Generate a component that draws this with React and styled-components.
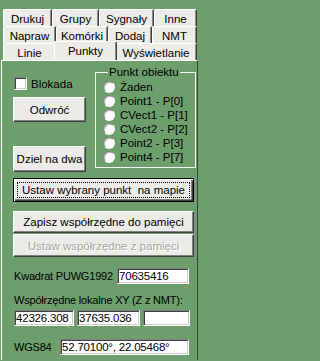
import React from 'react';
import styled, { createGlobalStyle } from 'styled-components';

const GREEN = '#6d9f6d';
const FACE = '#ecebe8';

const GlobalStyle = createGlobalStyle`
  html, body {
    margin: 0;
    padding: 0;
    background: ${GREEN};
  }
  body {
    font-family: "Liberation Sans", Arial, sans-serif;
    font-size: 11px;
    color: #000;
  }
`;

const Window = styled.div`
  width: 200px;
  height: 361px;
  overflow: hidden;
  box-sizing: border-box;
  padding-top: 9px;
  background: ${GREEN};
`;

/* zakładki */

const TabRow = styled.div`
  display: flex;
  height: 17px;
  padding-left: 3px;
  position: relative;
`;

const Tab = styled.div`
  position: relative;
  box-sizing: border-box;
  width: ${p => p.$w}px;
  height: ${p => (p.$active ? 19 : 17)}px;
  margin: ${p => (p.$active ? '-2px -2px 0' : '0')};
  z-index: ${p => (p.$active ? 2 : 1)};
  display: flex;
  align-items: center;
  justify-content: center;
  background: ${FACE};
  border-top: 1px solid #fff;
  border-left: 1px solid #fff;
  border-right: 1px solid #404040;
  border-top-left-radius: 2px;
  border-top-right-radius: 2px;
  box-shadow: inset -1px 0 #8a8a8a;
  padding-top: ${p => (p.$active ? 0 : 1)}px;
  font-size: 11.5px;
  white-space: nowrap;
`;

/* panel */

const Panel = styled.div`
  margin: 0 2px 0 1px;
  height: 300px;
  box-sizing: border-box;
  border-top: 1px solid #fff;
  border-left: 1px solid #fff;
  border-right: 1px solid #404040;
  padding: 0 3px 0 11px;
  display: flex;
  flex-direction: column;
`;

const TopSection = styled.div`
  display: flex;
  gap: 9px;
`;

const LeftCol = styled.div`
  width: 73px;
  display: flex;
  flex-direction: column;
`;

const CheckRow = styled.label`
  display: flex;
  align-items: center;
  gap: 4px;
  height: 13px;
  margin: 16px 0 0 1px;
  font-size: 11.5px;
`;

const CheckBox = styled.span`
  width: 13px;
  height: 13px;
  box-sizing: border-box;
  background: #fff;
  border: 1px solid;
  border-color: #808080 #fff #fff #808080;
  box-shadow: inset 1px 1px #404040, inset -1px -1px #d4d0c8;
`;

const Button = styled.button`
  box-sizing: border-box;
  width: 100%;
  height: ${p => p.$h}px;
  margin: ${p => p.$mt}px 0 0 0;
  padding: 0;
  font-family: inherit;
  font-size: 11.5px;
  white-space: pre;
  background: ${FACE};
  color: ${p => (p.disabled ? '#a6a6a6' : '#000')};
  text-shadow: ${p => (p.disabled ? '1px 1px #fff' : 'none')};
  border: 1px solid;
  border-color: ${p => (p.$default ? '#000' : '#fff #404040 #404040 #fff')};
  box-shadow: ${p =>
    p.$default
      ? 'inset 1px 1px #fff, inset -1px -1px #404040, inset -2px -2px #808080'
      : 'inset -1px -1px #808080'};
  outline: ${p => (p.$default ? '1px dotted #000' : 'none')};
  outline-offset: -5px;
`;

const GroupBox = styled.fieldset`
  box-sizing: border-box;
  width: 101px;
  height: 102px;
  margin: 5px -2px 0 0;
  padding: 1px 0 0 7px;
  border: 1px solid #f2f2f2;
  min-width: 0;
`;

const Legend = styled.legend`
  padding: 0 1px;
  margin-left: 5px;
  line-height: 13px;
  font-size: 11.5px;
`;

const RadioRow = styled.div`
  display: flex;
  align-items: center;
  gap: 5px;
  height: 14px;
  font-size: 11.5px;
`;

const RadioDot = styled.span`
  width: 12px;
  height: 12px;
  box-sizing: border-box;
  border-radius: 50%;
  background: #fff;
  border: 1px solid;
  border-color: #808080 #fff #fff #808080;
  box-shadow: inset 1px 1px #bdbdbd;
`;

const FieldRow = styled.div`
  display: flex;
  align-items: center;
  gap: ${p => p.$gap || 0}px;
  margin-top: ${p => p.$mt}px;
  padding-left: 1px;
  height: 16px;
`;

const Label = styled.span`
  white-space: nowrap;
  line-height: 14px;
  letter-spacing: -0.2px;
  width: ${p => (p.$w ? `${p.$w}px` : 'auto')};
  margin-top: ${p => p.$mt || 0}px;
  padding-left: ${p => p.$pl || 0}px;
`;

const Field = styled.input`
  box-sizing: border-box;
  width: ${p => p.$w}px;
  height: 16px;
  margin: 0;
  padding: 0 1px;
  font-family: inherit;
  font-size: 11.5px;
  letter-spacing: -0.2px;
  color: #000;
  background: #fff;
  border: 1px solid;
  border-color: #808080 #fff #fff #808080;
  box-shadow: inset 1px 1px #404040, inset -1px -1px #d4d0c8;
  outline: none;
`;

const tabRows = [
  [['Drukuj', 49], ['Grupy', 47], ['Sygnały', 55], ['Inne', 43]],
  [['Napraw', 53], ['Komórki', 52], ['Dodaj', 44], ['NMT', 45]],
  [['Linie', 53], ['Punkty', 59, true], ['Wyświetlanie', 82]],
];

const points = ['Żaden', 'Point1 - P[0]', 'CVect1 - P[1]', 'CVect2 - P[2]', 'Point2 - P[3]', 'Point4 - P[7]'];

const App = () => {
  return (
    <Window>
      <GlobalStyle />

      {tabRows.map((row, i) => (
        <TabRow key={i}>
          {row.map(([name, w, active]) => (
            <Tab key={name} $w={active ? w + 4 : w} $active={active}>
              {name}
            </Tab>
          ))}
        </TabRow>
      ))}

      <Panel>
        <TopSection>
          <LeftCol>
            <CheckRow><CheckBox />Blokada</CheckRow>
            <Button $h={25} $mt={7}>Odwróć</Button>
            <Button $h={26} $mt={24}>Dziel na dwa</Button>
          </LeftCol>

          <GroupBox>
            <Legend>Punkt obiektu</Legend>
            {points.map(p => (
              <RadioRow key={p}><RadioDot />{p}</RadioRow>
            ))}
          </GroupBox>
        </TopSection>

        <Button $h={24} $mt={6} $default>{'Ustaw wybrany punkt  na mapie'}</Button>
        <Button $h={22} $mt={9}>Zapisz współrzędne do pamięci</Button>
        <Button $h={23} $mt={1} disabled>Ustaw współrzędne z pamięci</Button>

        <FieldRow $mt={11}>
          <Label $w={103}>Kwadrat PUWG1992</Label>
          <Field $w={72} readOnly value="70635416" />
        </FieldRow>

        <Label $mt={9} $pl={1}>Współrzędne lokalne XY (Z z NMT):</Label>

        <FieldRow $mt={3} $gap={3}>
          <Field $w={60} readOnly value="42326.308" />
          <Field $w={63} readOnly value="37635.036" />
          <Field $w={47} readOnly value="" />
        </FieldRow>

        <FieldRow $mt={13}>
          <Label $w={46}>WGS84</Label>
          <Field $w={129} readOnly value="52.70100°, 22.05468°" />
        </FieldRow>
      </Panel>
    </Window>
  );
};

export default App;
